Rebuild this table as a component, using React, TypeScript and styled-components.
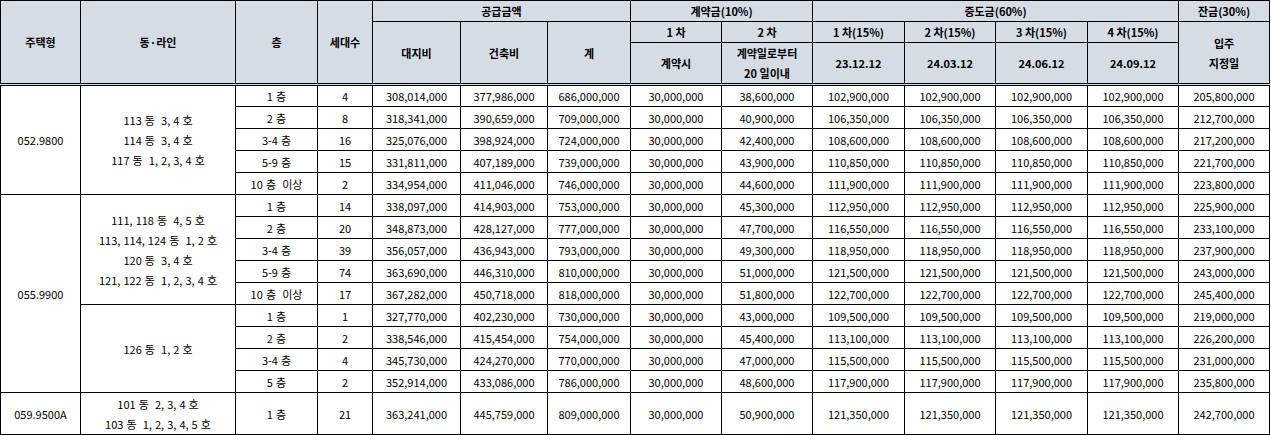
import React from "react";
import styled, { createGlobalStyle } from "styled-components";

const Global = createGlobalStyle`
  html, body { margin: 0; padding: 0; background: #fff; }
  body { font-family: "Noto Sans CJK KR", "Noto Sans", sans-serif; }
`;

const Table = styled.table`
  width: 1270px;
  table-layout: fixed;
  border-collapse: collapse;
  font-family: "Noto Sans CJK KR", "Noto Sans", sans-serif;
  font-size: 11px;
  color: #000;
`;

const HeadRow = styled.tr<{ $h: number }>`
  height: ${(p) => p.$h}px;
`;

const Th = styled.th<{ $last?: boolean }>`
  background: #d6dce4;
  border: 1px solid #000;
  ${(p) => (p.$last ? "border-bottom: 3px double #000;" : "")}
  font-weight: 700;
  text-align: center;
  vertical-align: middle;
  padding: 0;
  line-height: 20px;
  white-space: pre;
`;

const BodyRow = styled.tr<{ $tall?: boolean }>`
  height: ${(p) => (p.$tall ? 42 : 22)}px;
`;

const Td = styled.td`
  border: 1px solid #000;
  text-align: center;
  vertical-align: middle;
  padding: 0;
  line-height: 20px;
  white-space: pre;
  word-spacing: 0.6px;
  font-weight: 400;
`;

const widths = [80, 155, 82, 55, 88, 87, 83, 91, 91, 92, 91, 92, 91, 91];

type Row = {
  floor: string;
  units: string;
  land: string;
  build: string;
  total: string;
  c1: string;
  c2: string;
  mid: string[];
  bal: string;
};

const r = (
  floor: string,
  units: string,
  land: string,
  build: string,
  total: string,
  c2: string,
  m: string,
  bal: string
): Row => ({
  floor,
  units,
  land,
  build,
  total,
  c1: "30,000,000",
  c2,
  mid: [m, m, m, m],
  bal,
});

type Sub = { lines: string; rows: Row[] };
type Group = { type: string; subs: Sub[]; tall?: boolean };

const groups: Group[] = [
  {
    type: "052.9800",
    subs: [
      {
        lines: "113 동  3, 4 호\n114 동  3, 4 호\n117 동  1, 2, 3, 4 호",
        rows: [
          r("1 층", "4", "308,014,000", "377,986,000", "686,000,000", "38,600,000", "102,900,000", "205,800,000"),
          r("2 층", "8", "318,341,000", "390,659,000", "709,000,000", "40,900,000", "106,350,000", "212,700,000"),
          r("3-4 층", "16", "325,076,000", "398,924,000", "724,000,000", "42,400,000", "108,600,000", "217,200,000"),
          r("5-9 층", "15", "331,811,000", "407,189,000", "739,000,000", "43,900,000", "110,850,000", "221,700,000"),
          r("10 층  이상", "2", "334,954,000", "411,046,000", "746,000,000", "44,600,000", "111,900,000", "223,800,000"),
        ],
      },
    ],
  },
  {
    type: "055.9900",
    subs: [
      {
        lines: "111, 118 동  4, 5 호\n113, 114, 124 동  1, 2 호\n120 동  3, 4 호\n121, 122 동  1, 2, 3, 4 호",
        rows: [
          r("1 층", "14", "338,097,000", "414,903,000", "753,000,000", "45,300,000", "112,950,000", "225,900,000"),
          r("2 층", "20", "348,873,000", "428,127,000", "777,000,000", "47,700,000", "116,550,000", "233,100,000"),
          r("3-4 층", "39", "356,057,000", "436,943,000", "793,000,000", "49,300,000", "118,950,000", "237,900,000"),
          r("5-9 층", "74", "363,690,000", "446,310,000", "810,000,000", "51,000,000", "121,500,000", "243,000,000"),
          r("10 층  이상", "17", "367,282,000", "450,718,000", "818,000,000", "51,800,000", "122,700,000", "245,400,000"),
        ],
      },
      {
        lines: "126 동  1, 2 호",
        rows: [
          r("1 층", "1", "327,770,000", "402,230,000", "730,000,000", "43,000,000", "109,500,000", "219,000,000"),
          r("2 층", "2", "338,546,000", "415,454,000", "754,000,000", "45,400,000", "113,100,000", "226,200,000"),
          r("3-4 층", "4", "345,730,000", "424,270,000", "770,000,000", "47,000,000", "115,500,000", "231,000,000"),
          r("5 층", "2", "352,914,000", "433,086,000", "786,000,000", "48,600,000", "117,900,000", "235,800,000"),
        ],
      },
    ],
  },
  {
    type: "059.9500A",
    tall: true,
    subs: [
      {
        lines: "101 동  2, 3, 4 호\n103 동  1, 2, 3, 4, 5 호",
        rows: [
          r("1 층", "21", "363,241,000", "445,759,000", "809,000,000", "50,900,000", "121,350,000", "242,700,000"),
        ],
      },
    ],
  },
];

export default function App() {
  return (
    <>
      <Global />
      <Table>
        <colgroup>
          {widths.map((w, i) => (
            <col key={i} style={{ width: w }} />
          ))}
        </colgroup>
        <thead>
          <HeadRow $h={20}>
            <Th rowSpan={3} $last>주택형</Th>
            <Th rowSpan={3} $last>동·라인</Th>
            <Th rowSpan={3} $last>층</Th>
            <Th rowSpan={3} $last>세대수</Th>
            <Th colSpan={3}>공급금액</Th>
            <Th colSpan={2}>계약금(10%)</Th>
            <Th colSpan={4}>중도금(60%)</Th>
            <Th>잔금(30%)</Th>
          </HeadRow>
          <HeadRow $h={21}>
            <Th rowSpan={2} $last>대지비</Th>
            <Th rowSpan={2} $last>건축비</Th>
            <Th rowSpan={2} $last>계</Th>
            <Th>1 차</Th>
            <Th>2 차</Th>
            <Th>1 차(15%)</Th>
            <Th>2 차(15%)</Th>
            <Th>3 차(15%)</Th>
            <Th>4 차(15%)</Th>
            <Th rowSpan={2} $last>{"입주\n지정일"}</Th>
          </HeadRow>
          <HeadRow $h={39}>
            <Th $last>계약시</Th>
            <Th $last>{"계약일로부터\n20 일이내"}</Th>
            <Th $last>23.12.12</Th>
            <Th $last>24.03.12</Th>
            <Th $last>24.06.12</Th>
            <Th $last>24.09.12</Th>
          </HeadRow>
        </thead>
        <tbody>
          {groups.map((g) => {
            const total = g.subs.reduce((a, s) => a + s.rows.length, 0);
            return g.subs.map((s, si) =>
              s.rows.map((row, ri) => (
                <BodyRow key={`${g.type}-${si}-${ri}`} $tall={g.tall}>
                  {si === 0 && ri === 0 && <Td rowSpan={total}>{g.type}</Td>}
                  {ri === 0 && <Td rowSpan={s.rows.length}>{s.lines}</Td>}
                  <Td>{row.floor}</Td>
                  <Td>{row.units}</Td>
                  <Td>{row.land}</Td>
                  <Td>{row.build}</Td>
                  <Td>{row.total}</Td>
                  <Td>{row.c1}</Td>
                  <Td>{row.c2}</Td>
                  {row.mid.map((m, mi) => (
                    <Td key={mi}>{m}</Td>
                  ))}
                  <Td>{row.bal}</Td>
                </BodyRow>
              ))
            );
          })}
        </tbody>
      </Table>
    </>
  );
}
